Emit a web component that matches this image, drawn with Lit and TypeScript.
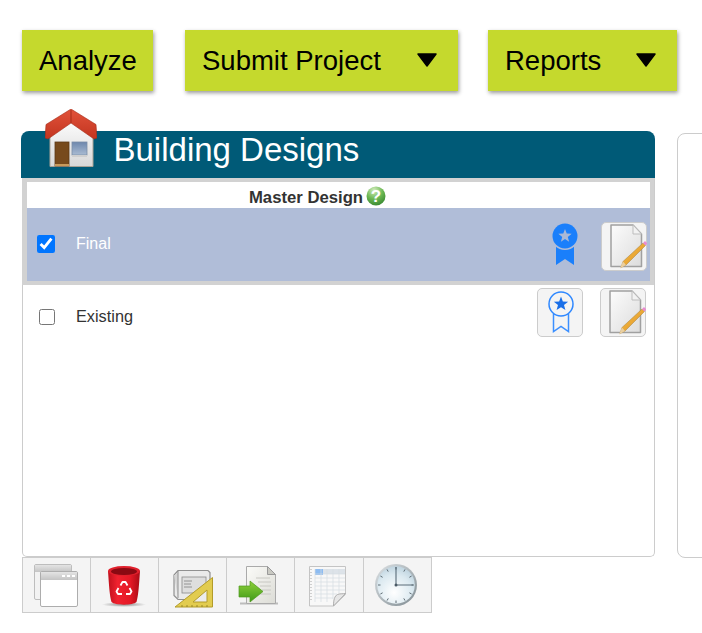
import { css, html, LitElement } from "lit";
import { customElement } from "lit/decorators.js";

const caret = html`<svg class="caret" width="20" height="14" viewBox="0 0 20 14"><path d="M1 1h18L10 13z" fill="#000" stroke="#000" stroke-width="1.5" stroke-linejoin="round"/></svg>`;

const house = html`<svg class="house" width="52" height="58" viewBox="0 0 52 58">
  <defs>
    <linearGradient id="wall" x1="0" y1="0" x2="0" y2="1"><stop offset="0" stop-color="#fff"/><stop offset="1" stop-color="#d8d8d8"/></linearGradient>
    <linearGradient id="roof" x1="0" y1="0" x2="0" y2="1"><stop offset="0" stop-color="#e2523a"/><stop offset="1" stop-color="#c23520"/></linearGradient>
    <linearGradient id="glass" x1="0" y1="0" x2="0" y2="1"><stop offset="0" stop-color="#6d87ad"/><stop offset="1" stop-color="#a9bbd2"/></linearGradient>
  </defs>
  <path d="M5 20 26 8l22 12v37.500H5z" fill="url(#wall)" stroke="#a8a296"/>
  <rect x="10" y="33" width="14" height="24" fill="#774a1c" stroke="#5c3a17" stroke-width=".8"/>
  <rect x="10" y="55" width="14" height="2" fill="#c79a5c"/>
  <rect x="27" y="33" width="15" height="13" fill="url(#glass)" stroke="#7b8ea8" stroke-width=".8"/>
  <path d="M27 46h15v2H27z" fill="#cfcfcf"/>
  <path d="M26 0 51 15.500l1 13.500-3 1L26 14 3 30l-3-1 1-13.500z" fill="url(#roof)" stroke="#a52c18" stroke-width=".6"/>
  <path d="M26 1v13" stroke="#a52c18" stroke-width="1"/>
</svg>`;

const help = html`<svg class="help" width="20" height="20" viewBox="0 0 20 20">
  <defs><radialGradient id="hg" cx=".4" cy=".2" r=".9"><stop offset="0" stop-color="#d2ecbd"/><stop offset=".5" stop-color="#6cb852"/><stop offset="1" stop-color="#2d7f2b"/></radialGradient></defs>
  <circle cx="10" cy="10" r="9.500" fill="url(#hg)"/>
  <text x="10" y="16" text-anchor="middle" font-family="Liberation Sans, sans-serif" font-weight="700" font-size="17" fill="#fff">?</text>
</svg>`;

const star = (cx: number, cy: number, r: number, fill: string) => {
  const pts: string[] = [];
  for (let i = 0; i < 10; i++) {
    const a = -Math.PI / 2 + (i * Math.PI) / 5;
    const rad = i % 2 ? r * 0.42 : r;
    pts.push(`${(cx + rad * Math.cos(a)).toFixed(2)},${(cy + rad * Math.sin(a)).toFixed(2)}`);
  }
  return html`<svg x="0" y="0" width="46" height="49" viewBox="0 0 46 49"><polygon points=${pts.join(" ")} fill=${fill}/></svg>`;
};

const awardFilled = html`<svg width="46" height="49" viewBox="0 0 46 49">
  <path d="M14 23h18v20l-9-6-9 6z" fill="#1a7ffb"/>
  <circle cx="23" cy="14" r="14" fill="#b0bdd8"/>
  <circle cx="23" cy="14" r="12.500" fill="#1a7ffb"/>
  ${star(23, 14, 7, "#a9b8d6")}
</svg>`;

const awardOutline = html`<svg width="46" height="49" viewBox="0 0 46 49">
  <circle cx="24" cy="16" r="12" fill="none" stroke="#2f88ff" stroke-width="1.500"/>
  <path d="M16.500 26v17.500l7.500-5 7.500 5V26" fill="none" stroke="#3b8fff" stroke-width="1.500"/>
  ${star(24, 16, 7.500, "#1a6fe8")}
</svg>`;

const editPage = html`<svg width="46" height="49" viewBox="0 0 46 49">
  <defs>
    <linearGradient id="pg" x1="0" y1="0" x2="1" y2="1"><stop offset="0" stop-color="#fcfcfc"/><stop offset="1" stop-color="#dcdcdc"/></linearGradient>
    <linearGradient id="pc" x1="0" y1="0" x2="1" y2="1"><stop offset="0" stop-color="#f8c24b"/><stop offset="1" stop-color="#dd8f20"/></linearGradient>
  </defs>
  <path d="M10 3h22l8.500 9v32.500H10z" fill="url(#pg)" stroke="#a0a0a0" stroke-width="1.500" stroke-linejoin="round"/>
  <path d="M32 3v9h8.500z" fill="#f2f2f2" stroke="#bdbdbd"/>
  <path d="M22 39.500 42 21l2.500 2.500L25 43l-5 2.500z" fill="url(#pc)" stroke="#a58140" stroke-width=".5"/>
  <path d="M42 21l2-2 2.500 2.500-2 2z" fill="#e98cd0"/>
  <path d="M19 46.500l3-7 3 3.500z" fill="#e9cfa0"/>
</svg>`;

const windows = html`<svg width="68" height="56" viewBox="0 0 68 56">
  <defs><linearGradient id="wb" x1="0" y1="0" x2="0" y2="1"><stop offset="0" stop-color="#e4e4e4"/><stop offset="1" stop-color="#c4c4c4"/></linearGradient></defs>
  <rect x="12.500" y="7.500" width="37" height="35" rx="1.500" fill="#f2f2f2" stroke="#bdbdbd"/>
  <rect x="13" y="8" width="36" height="7" fill="url(#wb)"/>
  <rect x="18.500" y="14.500" width="37" height="35" rx="1.500" fill="#fff" stroke="#adadad"/>
  <rect x="19" y="15" width="36" height="8" fill="url(#wb)"/>
  <path d="M40 19h3M45 19h3M50 19h3" stroke="#fff" stroke-width="2"/>
</svg>`;

const trash = html`<svg width="68" height="56" viewBox="0 0 68 56">
  <defs>
    <linearGradient id="tr" x1="0" y1="0" x2="1" y2="0"><stop offset="0" stop-color="#c0101c"/><stop offset=".3" stop-color="#f0222f"/><stop offset=".7" stop-color="#e41926"/><stop offset="1" stop-color="#a90b15"/></linearGradient>
    <radialGradient id="ts"><stop offset="0" stop-color="#888"/><stop offset="1" stop-color="#888" stop-opacity="0"/></radialGradient>
  </defs>
  <ellipse cx="34" cy="47.500" rx="22" ry="2.500" fill="url(#ts)"/>
  <path d="M18 14c1 14 1.500 24 3.500 31 3 3.500 22 3.500 25 0 2-7 2.500-17 3.500-31z" fill="url(#tr)"/>
  <ellipse cx="34" cy="14" rx="16" ry="5" fill="#e0202c"/>
  <ellipse cx="34" cy="14.500" rx="13" ry="3.500" fill="#8a0912"/>
  <g fill="none" stroke="#fff" stroke-width="1.800" stroke-linejoin="round">
    <path d="M30.500 28.500l2-3.500h3l2 3.500"/>
    <path d="M39.500 31l2 3.500-1.500 2.500h-4"/>
    <path d="M32 37h-4l-1.500-2.500 2-3.500"/>
  </g>
</svg>`;

const blueprint = html`<svg width="68" height="56" viewBox="0 0 68 56">
  <path d="M20 13.500h30l2 2v27H20l-4-4V18z" fill="#eaeaea" stroke="#909090" stroke-width="1.200"/>
  <path d="M16 18l4-4v27" fill="#d5d5d5" stroke="#909090"/>
  <rect x="24" y="20" width="24" height="16" fill="#dedede" stroke="#8a8a8a" stroke-width=".8"/>
  <path d="M26 24h8M26 27h7M26 30h8" stroke="#8a8a8a" stroke-width=".9"/>
  <path d="M54.500 20.500v29.500H17z" fill="#e2cc4f" stroke="#b39c2a" stroke-width="1"/>
  <path d="M49 33v12H35z" fill="#ececec" stroke="#b39c2a"/>
  <path d="M24 50v-2M29 50v-2M34 50v-2M39 50v-2M44 50v-2M49 50v-2" stroke="#8c7a1e" stroke-width=".8"/>
</svg>`;

const docArrow = html`<svg width="68" height="56" viewBox="0 0 68 56">
  <defs>
    <linearGradient id="ga" x1="0" y1="0" x2="0" y2="1"><stop offset="0" stop-color="#8fd03a"/><stop offset="1" stop-color="#3f9a18"/></linearGradient>
    <linearGradient id="dg" x1="0" y1="0" x2="1" y2="1"><stop offset="0" stop-color="#fbfbf8"/><stop offset="1" stop-color="#dcdcd6"/></linearGradient>
  </defs>
  <rect x="14" y="45.500" width="38" height="2" fill="#bcbcbc"/>
  <path d="M20.500 9.500h21l8 8v29h-29z" fill="url(#dg)" stroke="#aaa"/>
  <path d="M41.500 9.500v8h8z" fill="#c9c9c2" stroke="#999"/>
  <path d="M30 21h14M32 25h13M34 29h11M36 33h9M34 37h11" stroke="#c8c8c2" stroke-width="1"/>
  <path d="M13 29h11v-5l13 10.500L24 45v-5H13z" fill="url(#ga)" stroke="#4f9820" stroke-width=".7"/>
</svg>`;

const sheet = html`<svg width="68" height="56" viewBox="0 0 68 56">
  <path d="M15.500 9.500h36v28l-12 11.500h-24z" fill="#f8f8f8" stroke="#c4c4c4"/>
  <rect x="21" y="12" width="30" height="5" fill="#dde3e9"/>
  <rect x="21" y="12" width="8" height="6" fill="#8dbcf2"/>
  <path d="M21 12v33M27 12v33M33 12v33M39 12v30M45 12v24M21 17h30M21 21h30M21 25h30M21 29h30M21 33h30M21 37h22M21 41h18" stroke="#d6dce2" stroke-width=".7" fill="none"/>
  <path d="M17 12v33" stroke="#cfcfcf" stroke-width="2" stroke-dasharray="1 2"/>
  <path d="M39.500 49c0-6 1-10 4-11.500 2-1 5-.5 8-1z" fill="#e6e6e6" stroke="#adadad"/>
</svg>`;

const clockTicks = Array.from({ length: 12 }, (_, i) => {
  const a = (i * Math.PI) / 6;
  return `M${(33 + 15.5 * Math.sin(a)).toFixed(1)} ${(28 - 15.5 * Math.cos(a)).toFixed(1)}L${(33 + 18 * Math.sin(a)).toFixed(1)} ${(28 - 18 * Math.cos(a)).toFixed(1)}`;
}).join("");

const clock = html`<svg width="68" height="56" viewBox="0 0 68 56">
  <defs>
    <linearGradient id="cr" x1="0" y1="0" x2="1" y2="1"><stop offset="0" stop-color="#dce1e4"/><stop offset="1" stop-color="#808c92"/></linearGradient>
    <radialGradient id="cf" cx=".45" cy=".7" r=".8"><stop offset="0" stop-color="#fff"/><stop offset=".6" stop-color="#dbe9f0"/><stop offset="1" stop-color="#b2cad8"/></radialGradient>
  </defs>
  <circle cx="33" cy="28" r="21" fill="url(#cr)"/>
  <circle cx="33" cy="28" r="18.800" fill="url(#cf)"/>
  <path d=${clockTicks} stroke="#5d6a72" stroke-width="1"/>
  <path d="M33 28V10M33 28h17" stroke="#5a6c78" stroke-width="1.100"/>
  <circle cx="33" cy="28" r="1.500" fill="#4a5a66"/>
</svg>`;

@customElement("app-root")
export class AppRoot extends LitElement {
  static override styles = css`
    :host {
      display: block;
      width: 702px;
      height: 633px;
      overflow: hidden;
      background: #fff;
      font-family: "Liberation Sans", Arial, sans-serif;
      color: #333;
    }

    .actions {
      display: flex;
      padding: 30px 0 0 22px;
    }

    .action {
      display: flex;
      align-items: center;
      justify-content: space-between;
      box-sizing: border-box;
      height: 61px;
      padding: 0 17px;
      border: none;
      background: #c5d92d;
      box-shadow: 1px 2px 4px rgba(0, 0, 0, 0.4);
      color: #000;
      font: 27.500px "Liberation Sans", Arial, sans-serif;
    }

    .action.analyze { width: 131px; }
    .action.submit { width: 273px; margin-left: 32px; padding-right: 21px; }
    .action.reports { width: 189px; margin-left: 30px; padding-right: 21px; }
    .caret { margin-top: -2px; }

    .main {
      display: flex;
      align-items: flex-start;
      padding: 40px 0 0 21px;
    }

    .designs {
      flex: none;
      width: 634px;
    }

    .side {
      flex: none;
      box-sizing: border-box;
      width: 120px;
      height: 425px;
      margin: 2px 0 0 22px;
      border: 1px solid #ccc;
      border-radius: 8px;
    }

    .title {
      position: relative;
      height: 47px;
      padding-left: 92.500px;
      border-radius: 8px 8px 0 0;
      background: #005a77;
      color: #fff;
      font-size: 33px;
      line-height: 37px;
    }

    .house {
      position: absolute;
      left: 24px;
      top: -22px;
    }

    .panel {
      box-sizing: border-box;
      height: 379px;
      margin-left: 1px;
      border: 1px solid #ccc;
      border-top: none;
      border-radius: 0 0 5px 5px;
    }

    .master {
      margin-left: -1px;
      border-style: solid;
      border-color: #d2d2d2;
      border-width: 4px 4px 4px 5px;
    }

    .master-head {
      display: flex;
      align-items: center;
      justify-content: center;
      gap: 3px;
      box-sizing: border-box;
      height: 26px;
      padding: 5px 42px 0 0;
      font-size: 16.700px;
      font-weight: 700;
    }

    .help { margin-top: -3px; }

    .row {
      display: flex;
      align-items: center;
    }

    .row.final {
      height: 73px;
      padding-left: 10px;
      background: #b0bdd8;
      color: #fff;
      font-size: 16px;
    }

    .row.existing {
      height: 63px;
      padding-left: 16px;
      padding-right: 8px;
      font-size: 16.300px;
    }

    .row input {
      flex: none;
      margin: 0;
    }

    .row.final input { width: 18px; height: 18px; margin-top: -2px; }
    .row.existing input { width: 16px; height: 16px; }

    .name {
      flex: 1;
      margin-left: 21px;
    }

    .row.final .name { margin-top: -2px; }

    .tool {
      box-sizing: border-box;
      display: flex;
      flex: none;
      width: 46px;
      height: 49px;
      padding: 0;
      border: 1px solid #ccc;
      border-radius: 5px;
      background: #f4f4f4;
    }

    .tool svg { margin: -1px; }
    .tool.bare { border-color: transparent; background: none; }
    .row.final .tool.bare { margin-right: 13px; margin-top: 3px; }
    .row.final .tool.edit { margin-right: 3px; margin-top: 3px; }
    .row.existing .tool { margin-top: -8px; }
    .row.existing .award { margin-right: 17px; }

    .toolbar {
      display: flex;
      margin-left: 1px;
    }

    .cell {
      box-sizing: border-box;
      display: flex;
      width: 68px;
      height: 56px;
      border: 1px solid #ccc;
      border-left: none;
      background: #f4f4f4;
    }

    .cell:first-child { width: 69px; border-left: 1px solid #ccc; }
    .cell svg { margin: -1px 0 0 -1px; flex: none; filter: blur(0.4px); }
    .cell.wide { width: 69px; }
  `;

  override render() {
    return html`
      <div class="actions">
        <button class="action analyze">Analyze</button>
        <button class="action submit">Submit Project ${caret}</button>
        <button class="action reports">Reports ${caret}</button>
      </div>
      <div class="main">
        <div class="designs">
          <div class="title">${house}Building Designs</div>
          <div class="panel">
            <div class="master">
              <div class="master-head">Master Design ${help}</div>
              <div class="row final">
                <input type="checkbox" checked />
                <span class="name">Final</span>
                <button class="tool bare">${awardFilled}</button>
                <button class="tool edit">${editPage}</button>
              </div>
            </div>
            <div class="row existing">
              <input type="checkbox" />
              <span class="name">Existing</span>
              <button class="tool award">${awardOutline}</button>
              <button class="tool edit">${editPage}</button>
            </div>
          </div>
          <div class="toolbar">
            <div class="cell">${windows}</div>
            <div class="cell">${trash}</div>
            <div class="cell">${blueprint}</div>
            <div class="cell">${docArrow}</div>
            <div class="cell wide">${sheet}</div>
            <div class="cell">${clock}</div>
          </div>
        </div>
        <div class="side"></div>
      </div>
    `;
  }
}
